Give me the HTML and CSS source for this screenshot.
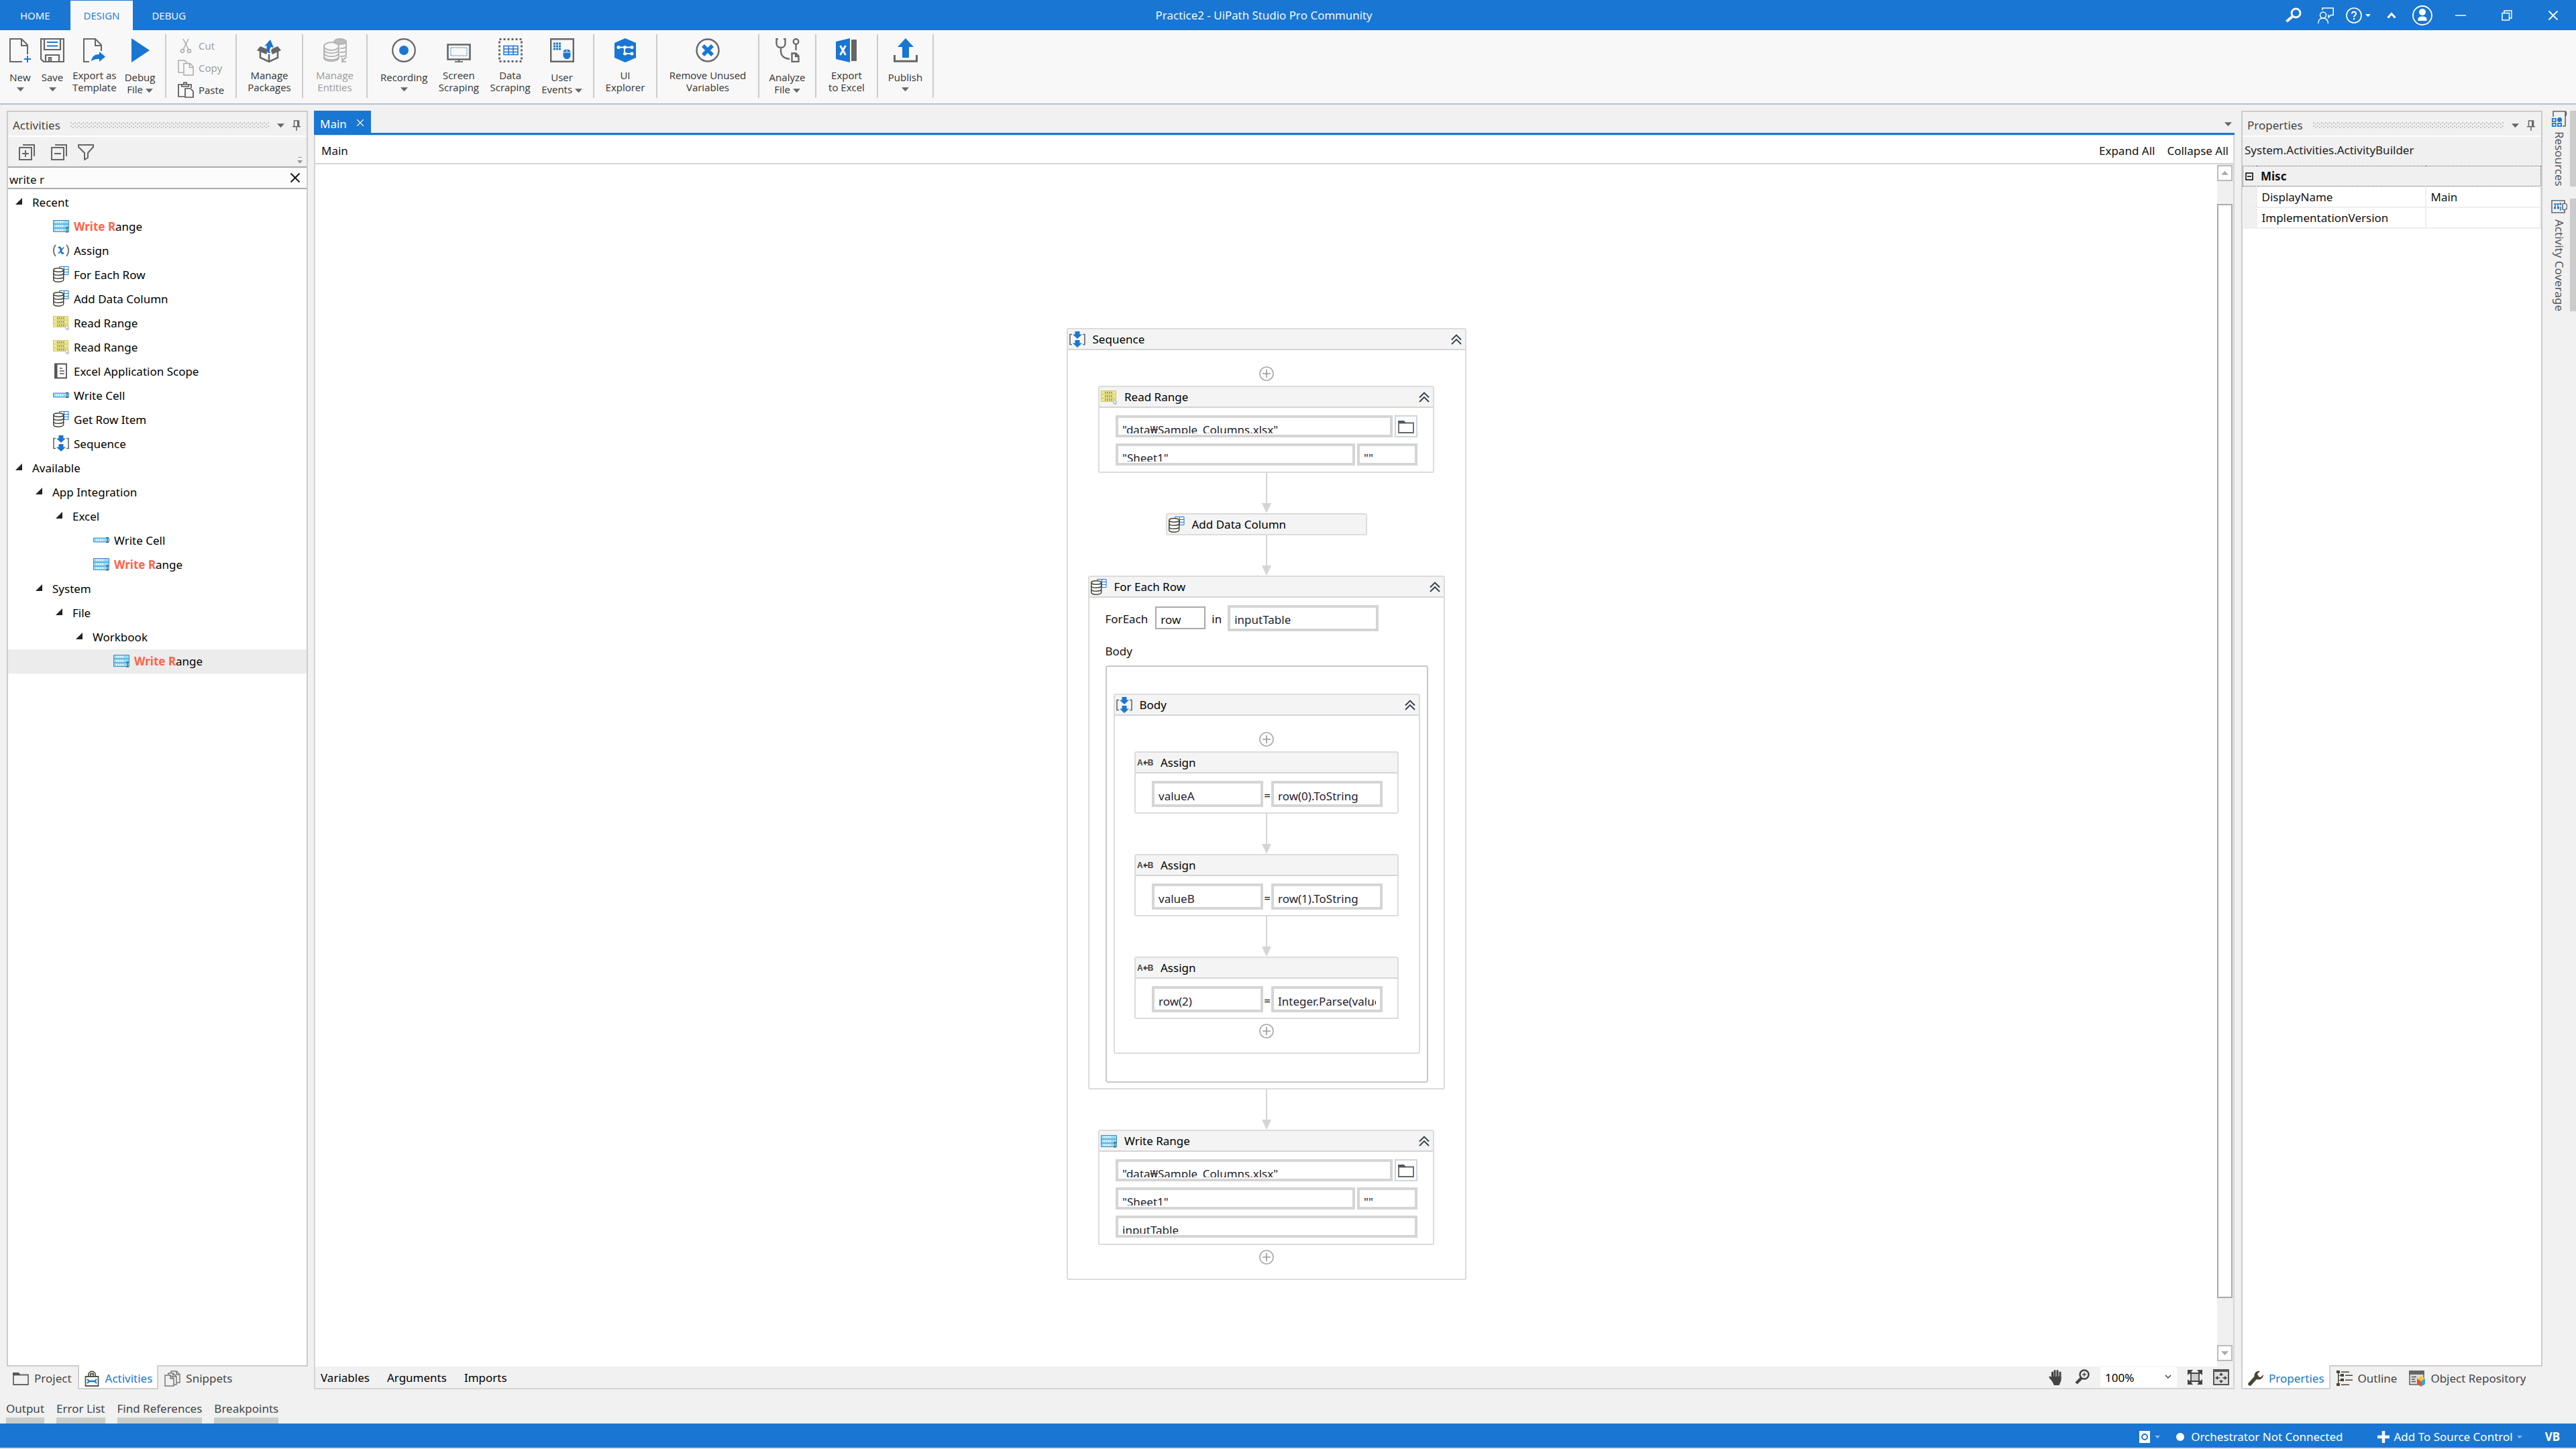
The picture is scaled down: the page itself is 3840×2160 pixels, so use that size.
FILE: index.html
```html
<!DOCTYPE html>
<html lang="en">
<head>
    <meta charset="utf-8">
    <title>Practice2 - UiPath Studio Pro Community</title>
    <link rel="stylesheet" href="styles.css">
</head>
<body>
    <svg class="sprite" aria-hidden="true">
        <symbol id="i-range-blue" viewBox="0 0 24 24">
            <path d="M.5 3.500h23v17H.5z" fill="#8fdcf8" stroke="#3f86c6"/>
            <path d="M.5 9h23M.5 15h23" stroke="#3f86c6"/>
            <path d="M4 6h12M4 12h12M4 18h12" stroke="#d4f3fd" stroke-width="3" stroke-dasharray="2 1"/>
            <path d="M19 14h4M21 14v7M19 21h4" stroke="#444" fill="none"/>
        </symbol>
        <symbol id="i-cell-blue" viewBox="0 0 24 24">
            <path d="M.5 9h23v6H.5z" fill="#8fdcf8" stroke="#3f86c6"/>
            <path d="M4 12h12" stroke="#d4f3fd" stroke-width="3" stroke-dasharray="2 1"/>
            <path d="M19 8.500h4M21 8.500v7M19 15.500h4" stroke="#444" fill="none"/>
        </symbol>
        <symbol id="i-range-yellow" viewBox="0 0 24 24">
            <path d="M.5 2.500h22v16H.5z" fill="#eee88f" stroke="#cfc96a"/>
            <path d="M.5 8h22M.5 13.500h22" stroke="#cfc96a"/>
            <path d="M6 5.300h11M6 10.700h11M6 16h11" stroke="#a7a26a" stroke-width="3" stroke-dasharray="2 1"/>
            <path d="M19 15v7l1.500-1.500 1 2.500 1.500-.7-1-2.300h2z" fill="#fff" stroke="#aaa"/>
        </symbol>
        <symbol id="i-db" viewBox="0 0 24 24">
            <path d="M9.500.500h13.500v12H9.500zM9.500 4.500H23M9.500 8.500H23M16.500.500v12" fill="#fff" stroke="#1976d2"/>
            <path d="M.8 5.500v14.800c0 1.600 3.200 2.900 7.200 2.900s7.700-1.300 7.700-2.900V5.500" fill="#fff" stroke="#454538" stroke-width="1.500"/>
            <ellipse cx="8.200" cy="5.500" rx="7.500" ry="2.800" fill="#fff" stroke="#454538" stroke-width="1.500"/>
            <path d="M.8 10.500c0 1.600 3.200 2.800 7.200 2.800s7.700-1.200 7.700-2.800M.8 15.500c0 1.600 3.200 2.800 7.200 2.800s7.700-1.200 7.700-2.800" fill="none" stroke="#454538" stroke-width="1.500"/>
        </symbol>
        <symbol id="i-assign" viewBox="0 0 24 24">
            <path d="M4 4C-.2 9-.2 16 4 21M20 4c4.200 5 4.200 12 0 17" fill="none" stroke="#666" stroke-width="1.700"/>
            <path d="M8 8.500c3-2 3.500 1 4 4s1.500 5.500 4 3.500" fill="none" stroke="#1673bd" stroke-width="2.600"/>
            <path d="M16.500 8c-2.500 0-6 8.500-9 8.500" fill="none" stroke="#1673bd" stroke-width="1.700"/>
        </symbol>
        <symbol id="i-book" viewBox="0 0 24 24">
            <path d="M3 1.500h17v21H3z" fill="#fff" stroke="#555" stroke-width="1.800"/>
            <path d="M2.500 1h4v22h-4z" fill="#555"/>
            <path d="M10 8h4M10 12h7M10 16h7" stroke="#555" stroke-width="1.300"/>
        </symbol>
        <symbol id="i-seq" viewBox="0 0 24 24">
            <path d="M4 4.500H1v15h3M20 4.500h3v15h-3" fill="none" stroke="#666" stroke-width="1.600"/>
            <path d="M8.500 0h7v4.500H19L12 11 5 4.500h3.500zM8.500 13h7v4.500H19L12 24l-7-6.500h3.500z" fill="#1976d2"/>
        </symbol>
        <symbol id="i-chev" viewBox="0 0 16 16">
            <path d="M1 8.500l7-7 7 7M1 15l7-7 7 7" fill="none" stroke="#333a4a" stroke-width="1.800"/>
        </symbol>
        <symbol id="i-plus" viewBox="0 0 22 22">
            <circle cx="11" cy="11" r="10" fill="#fff" stroke="#aaa" stroke-width="1.600"/>
            <path d="M11 5v12M5 11h12" stroke="#999" stroke-width="1.600"/>
        </symbol>
        <symbol id="i-arrow" viewBox="0 0 16 60">
            <path d="M8 0v46" stroke="#d5d5d5" stroke-width="2"/>
            <path d="M1 45h14L8 60z" fill="#d5d5d5"/>
        </symbol>
        <symbol id="i-left" viewBox="0 0 7 8">
            <path d="M0 4l4-4v3h3v2H4v3z" fill="#444"/>
        </symbol>
        <symbol id="i-folder" viewBox="0 0 24 24">
            <path d="M1 6.500h22V21H1z" fill="none" stroke="#666" stroke-width="1.800"/>
            <path d="M0 3h9l3 4H0z" fill="#555"/>
        </symbol>
        <symbol id="i-caret" viewBox="0 0 12 8">
            <path d="M0 1h12L6 7.500z" fill="currentColor"/>
        </symbol>
        <symbol id="i-x" viewBox="0 0 16 16">
            <path d="M1.500 1.500l13 13M14.500 1.500l-13 13" stroke="currentColor" stroke-width="1.800"/>
        </symbol>
        <symbol id="i-pin" viewBox="0 0 12 16">
            <path d="M2.500 9V1h7v8M0 9.700h12M6 10v6" fill="none" stroke="#666" stroke-width="1.500"/>
            <path d="M7 1h2.500v8H7z" fill="#666"/>
        </symbol>
    </svg>

    <header class="titlebar">
        <nav class="tabs">
            <a class="tab" href="#home">HOME</a>
            <a class="tab active" href="#design">DESIGN</a>
            <a class="tab" href="#debug">DEBUG</a>
        </nav>
        <h1 class="title">Practice2 - UiPath Studio Pro Community</h1>
        <div class="window-tools">
            <button class="tool" aria-label="Search"><svg class="ico24" viewBox="0 0 24 24"><circle cx="15.500" cy="8.500" r="6.500" fill="none" stroke="#fff" stroke-width="2.800"/><path d="M11 13l-9.500 8" stroke="#fff" stroke-width="4"/></svg></button>
            <button class="tool" aria-label="Feedback"><svg class="ico24" viewBox="0 0 24 24" fill="none" stroke="#fff" stroke-width="1.500"><circle cx="8" cy="11.500" r="4.500"/><path d="M.8 24c0-5 3-8 7.200-8s7.500 3 7.500 8M7 4V1h16.200v10.500h-3.500L16 15v-4"/></svg></button>
            <button class="tool help" aria-label="Help"><svg class="ico24" viewBox="0 0 24 24"><circle cx="12" cy="12" r="11" fill="none" stroke="#fff" stroke-width="1.700"/><path d="M9 9.500c0-4 6-4 6 0 0 2.300-3 2.300-3 5M12 16v2.400" fill="none" stroke="#fff" stroke-width="2"/></svg><svg class="caret-sm"><use href="#i-caret"/></svg></button>
            <button class="tool chevron" aria-label="Collapse ribbon"><svg class="ico14" viewBox="0 0 14 14"><path d="M1.500 10.500L7 4.500l5.500 6" fill="none" stroke="#fff" stroke-width="3"/></svg></button>
            <button class="tool user" aria-label="Account"><svg class="ico30" viewBox="0 0 30 30"><circle cx="15" cy="15" r="14" fill="none" stroke="#fff" stroke-width="1.800"/><circle cx="15" cy="10" r="5" fill="#fff"/><path d="M8.500 23v-2c0-3 2-4.500 6.500-4.500s6.500 1.500 6.500 4.500v2z" fill="#fff"/></svg></button>
            <button class="tool win" aria-label="Minimize"><svg class="ico16" viewBox="0 0 16 16"><path d="M0 8h16" stroke="#fff" stroke-width="1.500"/></svg></button>
            <button class="tool win" aria-label="Restore"><svg class="ico16" viewBox="0 0 16 16" fill="none" stroke="#fff" stroke-width="1.500"><path d="M1 4.500h10.500V15H1zM4 4V1h11v11h-3"/></svg></button>
            <button class="tool win" aria-label="Close"><svg class="ico16"><use href="#i-x"/></svg></button>
        </div>
    </header>

    <div class="ribbon">
        <div class="group first">
            <button class="cmd drop"><svg class="ico36" viewBox="0 0 36 36" fill="none"><path d="M21 35H3V1h17l9 9v14M20 1v10h9" stroke="#666" stroke-width="2"/><path d="M29 26v10M24 31h10" stroke="#1976d2" stroke-width="2"/></svg><span>New</span><svg class="caret"><use href="#i-caret"/></svg></button>
            <button class="cmd drop"><svg class="ico36" viewBox="0 0 36 36" fill="none"><path d="M1 1h34v34H5l-4-4zM6 1v16h24V1M8 35V25h20v10M13 35v-6h3v6" stroke="#666" stroke-width="2.200"/><path d="M10 6h16M10 11.500h16" stroke="#1976d2" stroke-width="2"/></svg><span>Save</span><svg class="caret"><use href="#i-caret"/></svg></button>
            <button class="cmd"><svg class="ico36" viewBox="0 0 36 36"><path d="M10 35H2V1h17l9 9v9M19 1v10h9" fill="none" stroke="#666" stroke-width="2"/><path d="M13 34c1-7 5-10 12-10v-4l9 7.500-9 7.500v-4c-5 0-8 .5-12 3z" fill="#1976d2"/></svg><span>Export as<br>Template</span></button>
            <button class="cmd drop"><svg class="ico36" viewBox="0 0 36 36"><path d="M5 0l27 18L5 36z" fill="#1976d2"/></svg><span>Debug<br>File <svg class="caret"><use href="#i-caret"/></svg></span></button>
        </div>
        <div class="group stack">
            <button class="row-cmd" disabled><svg class="ico24" viewBox="0 0 24 24" fill="none" stroke="#aaa" stroke-width="1.500"><path d="M8 2l7.500 15M16 2L8.500 17"/><circle cx="7" cy="20" r="2.500"/><circle cx="17" cy="20" r="2.500"/></svg>Cut</button>
            <button class="row-cmd" disabled><svg class="ico24" viewBox="0 0 24 24" fill="none" stroke="#aaa" stroke-width="1.500"><path d="M8 19H1V1h9l4 3.500M9 5.500h9l5 5V23H9zM17.500 5.500v6H23"/></svg>Copy</button>
            <button class="row-cmd"><svg class="ico24" viewBox="0 0 24 24" fill="none" stroke="#555" stroke-width="1.700"><path d="M10 22H1V4h19v5M6 7V4h3V1h4v3h3v3zM11 10h8l4 4v9H11z"/></svg>Paste</button>
        </div>
        <div class="group g-packages">
            <button class="cmd"><svg class="ico36" viewBox="0 0 36 36"><path d="M5 19v10l13 6 13-6V19M18 24v11" fill="none" stroke="#666" stroke-width="2.500"/><path d="M5 12l12 5-3 7L0 18zM31 12l-9 4-1 3 2 5 13-6z" fill="#666"/><path d="M17 22c-3-5-3-8-2-11l-4 1 9-10 5 12-4-1c-2 3-3 6-1 9z" fill="#1976d2"/></svg><span>Manage<br>Packages</span></button>
        </div>
        <div class="group g-entities">
            <button class="cmd" disabled><svg class="ico36" viewBox="0 0 36 36" fill="none" stroke="#b5b5b5" stroke-width="2"><ellipse cx="26" cy="5" rx="9" ry="4" fill="#bbb"/><ellipse cx="13" cy="12" rx="11" ry="6"/><path d="M2 12v5c0 7 22 7 22 0v-5M2 17v5c0 7 22 7 22 0v-5M2 22v5c0 7 22 7 22 0v-5M2 27v2c0 7 22 7 22 0v-2M35 6v6c0 2-4 3-9 3M35 13v5c0 2-4 3-9 3M35 19v5c0 2-4 3-9 3M36 27l-7 7M29 29v6h6"/></svg><span>Manage<br>Entities</span></button>
        </div>
        <div class="group g-record">
            <button class="cmd drop"><svg class="ico36" viewBox="0 0 36 36"><circle cx="18" cy="18" r="16.800" fill="none" stroke="#666" stroke-width="2.200"/><circle cx="18" cy="18" r="7" fill="#1976d2"/></svg><span>Recording</span><svg class="caret"><use href="#i-caret"/></svg></button>
            <button class="cmd"><svg class="ico36" viewBox="0 0 36 36" fill="none"><path d="M1.500 9.500h33v22h-33z" stroke="#666" stroke-width="2.600"/><path d="M6 14h24v12H6z" stroke="#1976d2" stroke-dasharray="1.500 1"/><path d="M18 32v3M12 35.200h12" stroke="#666" stroke-width="2"/></svg><span>Screen<br>Scraping</span></button>
            <button class="cmd"><svg class="ico36" viewBox="0 0 36 36" fill="none"><path d="M1.500 1.500h33v33h-33z" stroke="#666" stroke-width="3" stroke-dasharray="3"/><path d="M8 11.500h21v13H8zM8 16h21M8 20.500h21M15 11.500v13M22 11.500v13" stroke="#1976d2" stroke-width="1.500"/></svg><span>Data<br>Scraping</span></button>
            <button class="cmd drop"><svg class="ico36" viewBox="0 0 36 36"><path d="M1.200 1.200h33.600v33.600H1.200z" fill="none" stroke="#666" stroke-width="2.400"/><path d="M5 8h11M5 12h11M5 16h11" stroke="#1976d2" stroke-width="3" stroke-dasharray="3 1"/><path d="M19.500 21c0-6 11-6 11 0v4c0 8-11 8-11 0z" fill="#1976d2"/><path d="M25 16v5M19 21h12" stroke="#f8f8f8"/></svg><span>User<br>Events <svg class="caret"><use href="#i-caret"/></svg></span></button>
        </div>
        <div class="group g-explorer">
            <button class="cmd"><svg class="ico36" viewBox="0 0 36 36"><path d="M18 0l16 7v22l-16 7L2 29V7z" fill="#1976d2"/><path d="M8 13.500h20M17 13.500v9.500h11" fill="none" stroke="#fff" stroke-width="2"/><g fill="#fff"><circle cx="8" cy="13.500" r="2.500"/><circle cx="17.500" cy="13.500" r="2.500"/><circle cx="28" cy="13.500" r="2.500"/><circle cx="17.500" cy="23" r="2.500"/><circle cx="28" cy="23" r="2.500"/></g></svg><span>UI<br>Explorer</span></button>
        </div>
        <div class="group g-remove">
            <button class="cmd"><svg class="ico36" viewBox="0 0 36 36" fill="none"><circle cx="18" cy="18" r="16.500" stroke="#666" stroke-width="2.400"/><path d="M11 11l14 14M25 11L11 25" stroke="#1976d2" stroke-width="5.500"/></svg><span>Remove Unused<br>Variables</span></button>
        </div>
        <div class="group g-analyze">
            <button class="cmd drop"><svg class="ico36" viewBox="0 0 36 36" fill="none" stroke="#666" stroke-width="2.300"><path d="M4 1H1.500v7c0 8 13 8 13 0V1H12M8 14v5c0 8 5 11 13 12"/><circle cx="30.500" cy="5" r="3.800"/><path d="M30.500 9v9M24.500 22.500h6l4 4V35h-10zM30 22v5h5"/></svg><span>Analyze<br>File <svg class="caret"><use href="#i-caret"/></svg></span></button>
        </div>
        <div class="group g-excel">
            <button class="cmd"><svg class="ico36" viewBox="0 0 36 36"><path d="M2 5l21-5v36L2 31z" fill="#1976d2"/><path d="M25 2h8v32h-8z" fill="#666"/><path d="M8.500 11l8 14M16.500 11l-8 14" stroke="#fff" stroke-width="2.800"/></svg><span>Export<br>to Excel</span></button>
        </div>
        <div class="group g-publish">
            <button class="cmd drop"><svg class="ico36" viewBox="0 0 36 36"><path d="M1.500 25v9.200h33V25" fill="none" stroke="#666" stroke-width="3"/><path d="M18 0l12 13h-7v16H13V13H6z" fill="#1976d2"/></svg><span>Publish</span><svg class="caret"><use href="#i-caret"/></svg></button>
        </div>
    </div>

    <main class="workspace">
        <!-- Activities dock -->
        <aside class="dock">
            <section class="panel">
                <div class="panel-head">
                    <h2>Activities</h2><span class="grip"></span>
                    <button class="plain" aria-label="Panel menu"><svg class="caret"><use href="#i-caret"/></svg></button>
                    <button class="plain" aria-label="Pin panel"><svg class="pin"><use href="#i-pin"/></svg></button>
                </div>
                <div class="panel-tools">
                    <button class="plain" aria-label="Expand all"><svg class="ico24" viewBox="0 0 24 24" fill="none" stroke="#666" stroke-width="2"><path d="M1 5h18v18H1zM10 9v10M5 14h10M6 1h17v17"/></svg></button>
                    <button class="plain" aria-label="Collapse all"><svg class="ico24" viewBox="0 0 24 24" fill="none" stroke="#666" stroke-width="2"><path d="M1 5h18v18H1zM5 14h10M6 1h17v17"/></svg></button>
                    <button class="plain filter" aria-label="Filter"><svg class="ico24" viewBox="0 0 24 24" fill="none" stroke="#666" stroke-width="2"><path d="M1 1h22v3l-8 9v7l-5 3V13L1 4z"/></svg></button>
                    <svg class="overflow" viewBox="0 0 8 10"><path d="M1 .5h6" stroke="#999"/><path d="M0 5h8l-4 5z" fill="#999"/></svg>
                </div>
                <div class="search">
                    <input type="text" value="write r" aria-label="Search activities">
                    <button class="plain" aria-label="Clear search"><svg class="ico16"><use href="#i-x"/></svg></button>
                </div>
                <ul class="tree">
                    <li><i class="twist"></i>Recent</li>
                    <li class="leaf l1"><svg class="ico24"><use href="#i-range-blue"/></svg><span><mark>Write R</mark>ange</span></li>
                    <li class="leaf l1"><svg class="ico24"><use href="#i-assign"/></svg>Assign</li>
                    <li class="leaf l1"><svg class="ico24"><use href="#i-db"/></svg>For Each Row</li>
                    <li class="leaf l1"><svg class="ico24"><use href="#i-db"/></svg>Add Data Column</li>
                    <li class="leaf l1"><svg class="ico24"><use href="#i-range-yellow"/></svg>Read Range</li>
                    <li class="leaf l1"><svg class="ico24"><use href="#i-range-yellow"/></svg>Read Range</li>
                    <li class="leaf l1"><svg class="ico24"><use href="#i-book"/></svg>Excel Application Scope</li>
                    <li class="leaf l1"><svg class="ico24"><use href="#i-cell-blue"/></svg>Write Cell</li>
                    <li class="leaf l1"><svg class="ico24"><use href="#i-db"/></svg>Get Row Item</li>
                    <li class="leaf l1"><svg class="ico24"><use href="#i-seq"/></svg>Sequence</li>
                    <li><i class="twist"></i>Available</li>
                    <li class="l1"><i class="twist"></i>App Integration</li>
                    <li class="l2"><i class="twist"></i>Excel</li>
                    <li class="leaf l3"><svg class="ico24"><use href="#i-cell-blue"/></svg>Write Cell</li>
                    <li class="leaf l3"><svg class="ico24"><use href="#i-range-blue"/></svg><span><mark>Write R</mark>ange</span></li>
                    <li class="l1"><i class="twist"></i>System</li>
                    <li class="l2"><i class="twist"></i>File</li>
                    <li class="l3"><i class="twist"></i>Workbook</li>
                    <li class="leaf l4 selected"><svg class="ico24"><use href="#i-range-blue"/></svg><span><mark>Write R</mark>ange</span></li>
                </ul>
            </section>
            <nav class="dock-tabs">
                <a href="#project"><svg class="ico24"><use href="#i-folder"/></svg>Project</a>
                <a href="#activities" class="active"><svg class="ico24" viewBox="0 0 24 24"><path d="M2.500 9h19v14h-19zM7 9V6c0-6 10-6 10 0v3M10 8V5h4v3" fill="none" stroke="#555544" stroke-width="1.800"/><path d="M8 16h8" stroke="#1976d2" stroke-width="2.500"/><path d="M5 13l3 3-3 3M19 13l-3 3 3 3" fill="none" stroke="#1976d2" stroke-width="2"/></svg>Activities</a>
                <a href="#snippets"><svg class="ico24" viewBox="0 0 24 24" fill="#f1f1f1" stroke="#777" stroke-width="1.500"><path d="M10 1h8l5 5v12H10zM18 1v5h5"/><path d="M6 4h7l5 5v12H6zM13 4v5h5"/><path d="M1 7h8l5 5v11H1zM9 7v5h5"/></svg>Snippets</a>
            </nav>
        </aside>

        <!-- Designer -->
        <section class="designer">
            <div class="doc-tabs">
                <button class="doc-tab">Main <svg class="ico12"><use href="#i-x"/></svg></button>
                <button class="plain more" aria-label="Open documents"><svg class="caret"><use href="#i-caret"/></svg></button>
            </div>
            <div class="doc">
                <div class="crumbs">
                    <span>Main</span>
                    <div class="crumb-actions"><a href="#expand">Expand All</a><a href="#collapse">Collapse All</a></div>
                </div>
                <div class="stage">
                    <div class="canvas">
                        <article class="card sequence">
                            <header><svg class="ico24"><use href="#i-seq"/></svg>Sequence<svg class="chev"><use href="#i-chev"/></svg></header>
                            <div class="steps">
                                <button class="add" aria-label="Add activity"><svg><use href="#i-plus"/></svg></button>
                                <article class="card io">
                                    <header><svg class="ico24"><use href="#i-range-yellow"/></svg>Read Range<svg class="chev"><use href="#i-chev"/></svg></header>
                                    <div class="fields">
                                        <div class="line"><input class="expr grow" value="&quot;data₩Sample_Columns.xlsx&quot;" aria-label="Workbook path"><button class="browse" aria-label="Browse"><svg class="ico24"><use href="#i-folder"/></svg></button></div>
                                        <div class="line"><input class="expr grow" value="&quot;Sheet1&quot;" aria-label="Sheet name"><input class="expr range" value="&quot;&quot;" aria-label="Range"></div>
                                    </div>
                                </article>
                                <svg class="arrow"><use href="#i-arrow"/></svg>
                                <article class="card small">
                                    <header><svg class="ico24"><use href="#i-db"/></svg>Add Data Column</header>
                                </article>
                                <svg class="arrow"><use href="#i-arrow"/></svg>
                                <article class="card foreach">
                                    <header><svg class="ico24"><use href="#i-db"/></svg>For Each Row<svg class="chev"><use href="#i-chev"/></svg></header>
                                    <div class="loop">
                                        <div class="loop-head">
                                            <label for="item">ForEach</label>
                                            <input id="item" class="item" value="row">
                                            <label for="source">in</label>
                                            <input id="source" class="expr tall source" value="inputTable">
                                        </div>
                                        <p class="loop-label">Body</p>
                                        <div class="loop-body">
                                            <article class="card">
                                                <header><svg class="ico24"><use href="#i-seq"/></svg>Body<svg class="chev"><use href="#i-chev"/></svg></header>
                                                <div class="steps">
                                                    <button class="add" aria-label="Add activity"><svg><use href="#i-plus"/></svg></button>
                                                    <article class="card assign">
                                                        <header><b class="ab">A<svg><use href="#i-left"/></svg>B</b>Assign</header>
                                                        <div class="pair"><input class="expr tall" value="valueA" aria-label="To"><span>=</span><input class="expr tall" value="row(0).ToString" aria-label="Value"></div>
                                                    </article>
                                                    <svg class="arrow"><use href="#i-arrow"/></svg>
                                                    <article class="card assign">
                                                        <header><b class="ab">A<svg><use href="#i-left"/></svg>B</b>Assign</header>
                                                        <div class="pair"><input class="expr tall" value="valueB" aria-label="To"><span>=</span><input class="expr tall" value="row(1).ToString" aria-label="Value"></div>
                                                    </article>
                                                    <svg class="arrow"><use href="#i-arrow"/></svg>
                                                    <article class="card assign">
                                                        <header><b class="ab">A<svg><use href="#i-left"/></svg>B</b>Assign</header>
                                                        <div class="pair"><input class="expr tall" value="row(2)" aria-label="To"><span>=</span><input class="expr tall" value="Integer.Parse(valueA)" aria-label="Value"></div>
                                                    </article>
                                                    <button class="add last" aria-label="Add activity"><svg><use href="#i-plus"/></svg></button>
                                                </div>
                                            </article>
                                        </div>
                                    </div>
                                </article>
                                <svg class="arrow"><use href="#i-arrow"/></svg>
                                <article class="card io">
                                    <header><svg class="ico24"><use href="#i-range-blue"/></svg>Write Range<svg class="chev"><use href="#i-chev"/></svg></header>
                                    <div class="fields">
                                        <div class="line"><input class="expr grow" value="&quot;data₩Sample_Columns.xlsx&quot;" aria-label="Workbook path"><button class="browse" aria-label="Browse"><svg class="ico24"><use href="#i-folder"/></svg></button></div>
                                        <div class="line"><input class="expr grow" value="&quot;Sheet1&quot;" aria-label="Sheet name"><input class="expr range" value="&quot;&quot;" aria-label="Starting cell"></div>
                                        <div class="line"><input class="expr grow" value="inputTable" aria-label="Data table"></div>
                                    </div>
                                </article>
                                <button class="add last" aria-label="Add activity"><svg><use href="#i-plus"/></svg></button>
                            </div>
                        </article>
                    </div>
                    <div class="scrollbar">
                        <button class="scroll-btn up" aria-label="Scroll up"><svg class="caret"><use href="#i-caret"/></svg></button>
                        <div class="track"><div class="thumb"></div></div>
                        <button class="scroll-btn" aria-label="Scroll down"><svg class="caret"><use href="#i-caret"/></svg></button>
                    </div>
                </div>
                <div class="doc-foot">
                    <nav><a href="#variables">Variables</a><a href="#arguments">Arguments</a><a href="#imports">Imports</a></nav>
                    <div class="zoom-tools">
                        <button class="plain" aria-label="Pan"><svg class="ico24" viewBox="0 0 24 24"><path d="M6.500 13V5M10 12V2.500M14 12V2.500M18 13V5M8 18l-5-6" stroke="#444" stroke-width="3" stroke-linecap="round"/><path d="M5 11h14.500v6l-3 7H9l-4-8z" fill="#444"/></svg></button>
                        <button class="plain" aria-label="Zoom"><svg class="ico24" viewBox="0 0 24 24"><circle cx="15" cy="8" r="6.500" fill="none" stroke="#444" stroke-width="2.500"/><path d="M11 13l-8 8" stroke="#444" stroke-width="4.500"/><path d="M15 5v6M12 8h6" stroke="#444" stroke-width="1.400"/></svg></button>
                        <span class="zoom-level"><select aria-label="Zoom level"><option>100%</option></select><svg class="down" viewBox="0 0 10 6"><path d="M1 1l4 4 4-4" fill="none" stroke="#444" stroke-width="1.500"/></svg></span>
                        <button class="plain" aria-label="Fit to screen"><svg class="ico24" viewBox="0 0 24 24"><path d="M6 6h12v12H6z" fill="#ccc" stroke="#444" stroke-width="1.800"/><path d="M1 1h8L6.500 4 8 6 6 8 4 6.500 1 9zM23 1h-8l2.500 3L16 6l2 2 2-1.500L23 9zM1 23h8l-2.500-3L8 18l-2-2-2 1.500L1 15zM23 23h-8l2.500-3-1.500-2 2-2 2 1.500 3-2.500z" fill="#444"/></svg></button>
                        <button class="plain" aria-label="Overview"><svg class="ico24" viewBox="0 0 24 24"><path d="M1 1h22v22H1z" fill="#ddd" stroke="#555" stroke-width="2"/><path d="M1 3h22" stroke="#555" stroke-width="2"/><path d="M12 5l3 4H9zM12 21l3-4H9zM3 13l4-3v6zM21 13l-4-3v6z" fill="#444"/><path d="M12 8v2M12 16v2M7 13h3M14 13h3" stroke="#444" stroke-width="1.500"/></svg></button>
                    </div>
                </div>
            </div>
        </section>

        <!-- Properties dock -->
        <aside class="dock">
            <section class="panel">
                <div class="panel-head">
                    <h2>Properties</h2><span class="grip"></span>
                    <button class="plain" aria-label="Panel menu"><svg class="caret"><use href="#i-caret"/></svg></button>
                    <button class="plain" aria-label="Pin panel"><svg class="pin"><use href="#i-pin"/></svg></button>
                </div>
                <p class="type-name">System.Activities.ActivityBuilder</p>
                <table class="props">
                    <colgroup><col class="gutter-col"><col class="name-col"><col></colgroup>
                    <tr class="cat"><th colspan="3"><span><svg class="ico12" viewBox="0 0 12 12"><path d="M1 1h10v10H1zM3 6h6" fill="none" stroke="#000" stroke-width="1.500"/></svg>Misc</span></th></tr>
                    <tr><td class="gutter"></td><th>DisplayName</th><td>Main</td></tr>
                    <tr><td class="gutter"></td><th>ImplementationVersion</th><td></td></tr>
                </table>
            </section>
            <nav class="dock-tabs">
                <a href="#properties" class="active"><svg class="ico24" viewBox="0 0 24 24"><path d="M4 20l10-11" stroke="#4a4433" stroke-width="5.500" stroke-linecap="round"/><path d="M11 11c-2-6 2-11 8-10l-4 4 1 4 4 1 4-4c0 6-6 9-10 7z" fill="#4a4433"/></svg>Properties</a>
                <a href="#outline"><svg class="ico24" viewBox="0 0 24 24" fill="#4a4433"><path d="M0 0h5v4H0zM0 19h5v4H0zM6 5h5v4H6zM6 12h5v4H6zM7 1.500h12v1.500H7zM13 6.500h11v1.500H13zM13 13.500h11V15H13zM7 20.500h12V22H7zM2 4h1.500v15H2zM3 7h3v1H3zM3 14h3v1H3z"/></svg>Outline</a>
                <a href="#objects"><svg class="ico24" viewBox="0 0 24 24"><path d="M1 1h21v20H1z" fill="#ddd" stroke="#666" stroke-width="1.600"/><path d="M0 0h23v6H0z" fill="#666"/><path d="M4 9.500h7M4 13h5M4 16.500h6" stroke="#555" stroke-width="1.500"/><path d="M18 8l6 4-6 4-6-4z" fill="#f5c842"/><path d="M12 12l6 4v8l-6-4z" fill="#e0562f"/><path d="M24 12l-6 4v8l6-4z" fill="#35a4dc"/></svg>Object Repository</a>
            </nav>
        </aside>

        <nav class="side-tabs">
            <a href="#resources"><svg class="ico24" viewBox="0 0 24 24"><path d="M3 9V1h18c2 0 2 7 0 7V1M21 8v15h-4" fill="none" stroke="#666" stroke-width="1.600"/><path d="M1.800 11.800h5v4.400h-5zM1.800 18.800h5v4.400h-5zM10 18.800h5v4.400h-5z" fill="none" stroke="#1976d2" stroke-width="1.800"/><circle cx="12.500" cy="13.500" r="3.500" fill="#1976d2"/></svg><span>Resources</span></a>
            <a href="#coverage"><svg class="ico24" viewBox="0 0 24 24"><path d="M20 7V3H1v18h19v-4M17 8l3-1c5 1 5 9 0 10l-3-1z" fill="none" stroke="#666" stroke-width="1.600"/><path d="M4 8h11M6 8v7M10 8v7M14 6v4M14 12v6" stroke="#1976d2" stroke-width="1.500"/><path d="M4 14h3M9 14h3" stroke="#1976d2" stroke-width="3"/></svg><span>Activity Coverage</span></a>
        </nav>
    </main>

    <nav class="bottom-tabs">
        <a href="#output">Output</a>
        <a href="#errors">Error List</a>
        <a href="#references">Find References</a>
        <a href="#breakpoints">Breakpoints</a>
    </nav>

    <footer class="status">
        <button class="status-btn" aria-label="Notifications"><svg class="ico18" viewBox="0 0 18 18"><path d="M1 0h16v18H1z" fill="#fff"/><circle cx="9" cy="9" r="4" fill="none" stroke="#1976d2" stroke-width="2"/></svg><svg class="caret-sm dim"><use href="#i-caret"/></svg></button>
        <button class="status-btn orch"><span class="dot"></span>Orchestrator Not Connected</button>
        <button class="status-btn control"><svg class="ico18" viewBox="0 0 18 18"><path d="M9 0v18M0 9h18" stroke="#fff" stroke-width="4.500"/></svg>Add To Source Control<svg class="caret-sm dim"><use href="#i-caret"/></svg></button>
        <strong>VB</strong>
    </footer>
</body>
</html>
```
FILE: styles.css
```css
* { box-sizing: border-box; }
body {
    margin: 0;
    min-height: 100vh;
    display: flex;
    flex-direction: column;
    background: #f1f1f1;
    color: #111;
    font: 17px/24px "Noto Sans", "Noto Sans CJK KR", sans-serif;
}
a { color: inherit; text-decoration: none; }
button, input, select { font: inherit; color: inherit; margin: 0; border-radius: 0; }
button { background: none; border: 0; padding: 0; }
h1, h2, p, ul { margin: 0; padding: 0; font-size: inherit; font-weight: normal; }
svg { display: block; flex: none; }
.sprite { position: absolute; width: 0; height: 0; }

.ico12 { width: 12px; height: 12px; }
.ico14 { width: 14px; height: 14px; }
.ico16 { width: 16px; height: 16px; }
.ico18 { width: 18px; height: 18px; }
.ico24 { width: 24px; height: 24px; }
.ico30 { width: 30px; height: 30px; }
.ico36 { width: 36px; height: 36px; }
.caret { width: 11px; height: 8px; color: #666; }
.caret-sm { width: 8px; height: 6px; }
.pin { width: 12px; height: 16px; }
.plain { display: flex; align-items: center; }

/* title bar */
.titlebar { display: grid; grid-template-columns: 1fr auto 1fr; height: 45px; background: #1976d2; color: #fff; font-family: "Open Sans", sans-serif; }
.tabs { display: flex; padding-top: 1px; font-size: 15px; }
.tab { display: flex; align-items: center; padding: 0 30px; }
.tab.active { background: #f8f8f8; color: #1976d2; padding: 0 20px; }
.tab.active + .tab { padding: 0 28px; }
.title { align-self: center; padding-right: 72px; }
.window-tools { display: flex; justify-content: flex-end; align-items: center; gap: 24px; padding-right: 26px; }
.tool { display: flex; align-items: center; gap: 5px; }
.tool.help { margin-left: -6px; }
.tool.user { margin-right: 10px; }
.win + .win { margin-left: 29px; }

/* ribbon */
.ribbon { display: flex; height: 111px; padding: 6px 0; background: #f8f8f8; border-bottom: 2px solid #b4c3d1; font-family: "Open Sans", sans-serif; font-size: 15px; line-height: 18px; color: #333; }
.group { display: flex; justify-content: center; height: 95px; padding: 0 9px; gap: 1px; border-right: 2px solid #ccc; }
.group.first { width: 248px; padding: 0 0 0 7px; justify-content: flex-start; gap: 2px; }
.group.first .cmd { padding: 6px 5px 0; }
.group.stack { width: 105px; flex-direction: column; justify-content: space-between; padding: 5px 0 0 17px; }
.g-packages { width: 99px; }
.g-entities { width: 96px; }
.group.g-record { width: 338px; padding: 0 9px 0 12px; justify-content: space-between; }
.g-explorer { width: 94px; }
.g-remove { width: 152px; }
.g-analyze { width: 85px; }
.g-excel { width: 92px; }
.g-publish { width: 83px; }
.cmd { display: flex; flex-direction: column; align-items: center; padding: 6px 7px 0; white-space: nowrap; }
.cmd > span { margin-top: 10px; }
.cmd.drop > span { margin-top: 13px; }
.cmd > .caret { margin-top: 5px; }
.cmd span .caret { display: inline; }
.cmd:disabled, .row-cmd:disabled { color: #999; }
.row-cmd { display: flex; align-items: center; gap: 7px; }

/* docks */
.workspace { flex: 1; display: flex; gap: 10px; padding: 9px 0 0 10px; }
.dock { display: flex; flex-direction: column; width: 449px; }
.panel { flex: 1; display: flex; flex-direction: column; background: #fff; border: 2px solid #ccc; }
.panel-head { display: flex; align-items: center; height: 37px; padding: 5px 9px 0 7px; background: #f1f1f1; border-bottom: 2px solid #fff; color: #444; }
.panel-head button { margin-left: 12px; }
.grip {
    flex: 1; height: 10px; margin-left: 15px;
    background:
        radial-gradient(circle at 1px 1px, #c2c2c2 1px, transparent 1px) 0 0 / 6px 5px,
        radial-gradient(circle at 1px 1px, #c2c2c2 1px, transparent 1px) 3px 2px / 6px 5px;
}
.panel-tools { display: flex; align-items: center; gap: 24px; height: 44px; padding: 1px 6px 0 16px; background: #f1f1f1; }
.panel-tools .filter { margin-left: -8px; }
.overflow { width: 8px; height: 10px; margin: 24px 0 0 auto; }
.search { display: flex; height: 34px; padding-right: 9px; background: #fcfcfc; border: solid #aaa; border-width: 2px 0; }
.search input { flex: 1; min-width: 0; padding: 5px 0 0 2px; border: 0; background: none; }

.tree { padding-top: 2px; list-style: none; color: #000; }
.tree li { display: flex; align-items: center; height: 36px; padding-left: 11px; }
.tree .twist { width: 10px; height: 10px; margin: 0 15px 4px 0; background: #222; clip-path: polygon(100% 0, 100% 100%, 0 100%); }
.tree .l1 { padding-left: 41px; }
.tree .l2 { padding-left: 71px; }
.tree .l3 { padding-left: 101px; }
.tree .l4 { padding-left: 131px; }
.tree .leaf { gap: 7px; }
.tree .leaf svg { margin-bottom: 3px; }
.tree .leaf.l1 { padding-left: 67px; }
.tree .leaf.l3 { padding-left: 127px; }
.tree .leaf.l4 { padding-left: 157px; }
.tree .selected { background: #ececec; }
mark { background: none; color: #ff6347; font-weight: bold; }

.dock-tabs { display: flex; height: 34px; color: #444; }
.dock-tabs a { display: flex; align-items: center; gap: 8px; padding: 2px 9px 0; }
.dock-tabs a.active { margin-top: -2px; background: #fff; border: 2px solid #d0d0d0; border-top: 0; color: #1976d2; padding: 5px 7px 0; }

.type-name { padding: 8px 4px 10px 3px; height: 43px; background: #f0f0f0; color: #222; }
.props { width: 100%; border-collapse: collapse; table-layout: fixed; color: #111; }
.gutter-col { width: 20px; }
.name-col { width: 252px; }
.props th, .props td { height: 31px; padding: 2px 0 0 7px; border: solid #eee; border-width: 0 2px 2px 0; font-weight: normal; text-align: left; }
.props .cat th { height: 30px; padding: 0 3px; background: #f0f0f0; border: 1px dotted #555; font-weight: bold; }
.props .cat span { display: flex; align-items: center; gap: 11px; }
.props .gutter { padding: 0; background: #f0f0f0; }

.side-tabs { display: flex; flex-direction: column; gap: 18px; margin-left: auto; padding-left: 3px; }
.side-tabs a { display: flex; align-items: center; gap: 7px; writing-mode: vertical-rl; color: #555; border-right: 9px solid #ccc; padding-right: 4px; }

/* designer */
.designer { flex: 1; display: flex; flex-direction: column; min-width: 0; margin-left: -1px; }
.doc-tabs { display: flex; justify-content: space-between; height: 36px; border-bottom: 3px solid #1976d2; }
.doc-tab { display: flex; align-items: center; gap: 14px; padding: 6px 10px 0 9px; background: #1976d2; color: #fff; }
.doc-tab svg { margin-bottom: 4px; }
.more { padding: 6px 4px 0; }
.doc { flex: 1; display: flex; flex-direction: column; background: #fff; border: 2px solid #d5d5d5; border-top-width: 1px; }
.crumbs { display: flex; justify-content: space-between; align-items: center; height: 43px; padding: 4px 7px 0 9px; border-bottom: 2px solid #d5d5d5; }
.crumb-actions { display: flex; gap: 18px; }
.stage { flex: 1; display: flex; }
.canvas { flex: 1; padding-top: 244px; }
.scrollbar { display: flex; flex-direction: column; width: 24px; padding: 1px 1px 8px 0; background: #f0f0f0; }
.scroll-btn { display: flex; align-items: center; justify-content: center; height: 24px; background: #fff; border: 2px solid #bbb; }
.scroll-btn .caret { color: #aaa; }
.scroll-btn.up .caret { transform: rotate(180deg); }
.track { flex: 1; padding: 34px 0 70px; display: flex; }
.thumb { flex: 1; background: #fff; border: 2px solid #aaa; }
.doc-foot { display: flex; justify-content: space-between; height: 32px; background: #f1f1f1; color: #000; }
.doc-foot nav { display: flex; align-items: center; gap: 26px; padding: 2px 0 0 8px; }
.zoom-tools { display: flex; align-items: center; gap: 15px; padding-right: 6px; }
.zoom-level { position: relative; width: 114px; height: 30px; }
.zoom-level select { width: 100%; height: 100%; padding: 2px 7px 0; border: 0; background: #fff; appearance: none; }
.zoom-level .down { position: absolute; right: 8px; top: 11px; width: 10px; height: 6px; pointer-events: none; }

/* activity cards */
.card { background: #fff; border: 2px solid #dcdcdc; border-radius: 3px; }
.card > header { display: flex; align-items: center; gap: 11px; height: 31px; padding: 0 5px 0 2px; background: #f4f4f4; border-bottom: 2px solid #d5d5d5; color: #000; }
.card .chev { width: 16px; height: 16px; margin-left: auto; }
.sequence { width: 596px; margin: 0 auto; }
.steps { display: flex; flex-direction: column; align-items: center; padding: 24px 0 21px; }
.add { margin-bottom: 7px; }
.add.last { margin: 7px 0 0; }
.add svg { width: 22px; height: 22px; }
.arrow { width: 16px; height: 60px; }
.io { width: 501px; }
.small { width: 300px; }
.small > header { height: 29px; border-bottom: 0; }
.foreach { width: 532px; }
.assign { width: 394px; }
.card .ab { display: flex; align-items: center; width: 24px; font: bold 12px/20px "Liberation Sans", sans-serif; color: #444; }
.ab svg { width: 7px; height: 8px; }

.fields { display: flex; flex-direction: column; gap: 9px; padding: 11px 23px 9px 24px; }
.line { display: flex; gap: 4px; }
/* one-line fields are shorter than their text, which is cut at the bottom edge */
.expr { min-width: 0; height: 25px; margin: 4px; padding: 12px 6px 0; border: 0; border-bottom: 2px solid #fff; outline: 4px solid #d5d5d5; background: #fff; color: #223; }
.expr.tall { height: 31px; padding: 5px 6px 0; border: 0; }
.grow { flex: 1; }
.line .grow { margin-right: 3px; }
.expr.range { width: 82px; }
.line .grow:last-child { margin-right: 4px; }
.browse { display: flex; align-items: center; justify-content: center; width: 34px; height: 33px; border: 2px solid #ccd5e2; }
.pair { display: grid; grid-template-columns: 1fr 12px 1fr; align-items: center; height: 58px; padding: 11px 22px 8px 24px; }
.pair span { text-align: center; padding-top: 4px; }

.loop { padding: 11px 23px 8px 24px; }
.loop-head { display: flex; align-items: center; gap: 9px; height: 38px; }
.loop-head label { padding-top: 4px; }
.loop-head .item { width: 75px; height: 34px; padding: 4px 6px 0; border: 2px solid #aaa; margin-left: 2px; }
.source { width: 217px; }
.loop-label { padding: 19px 0 9px; }
.loop-body { padding: 40px 10px 41px; border: 2px solid #c8c8c8; border-radius: 4px; }

/* bottom strips */
.bottom-tabs { display: flex; gap: 18px; height: 51px; padding: 17px 9px 0; color: #444; }
.bottom-tabs a { border-bottom: 9px solid #ccc; }
.status { display: flex; align-items: center; justify-content: flex-end; height: 38px; padding: 4px 24px 0; background: #1976d2; border-bottom: 2px solid #d3ddec; color: #fff; }
.status-btn { display: flex; align-items: center; gap: 6px; }
.status .dim { color: #8fbdea; }
.dot { width: 12px; height: 12px; margin-right: 4px; border-radius: 50%; background: #fff; }
.orch { margin-left: 24px; }
.control { margin: 0 34px 0 52px; }
```
